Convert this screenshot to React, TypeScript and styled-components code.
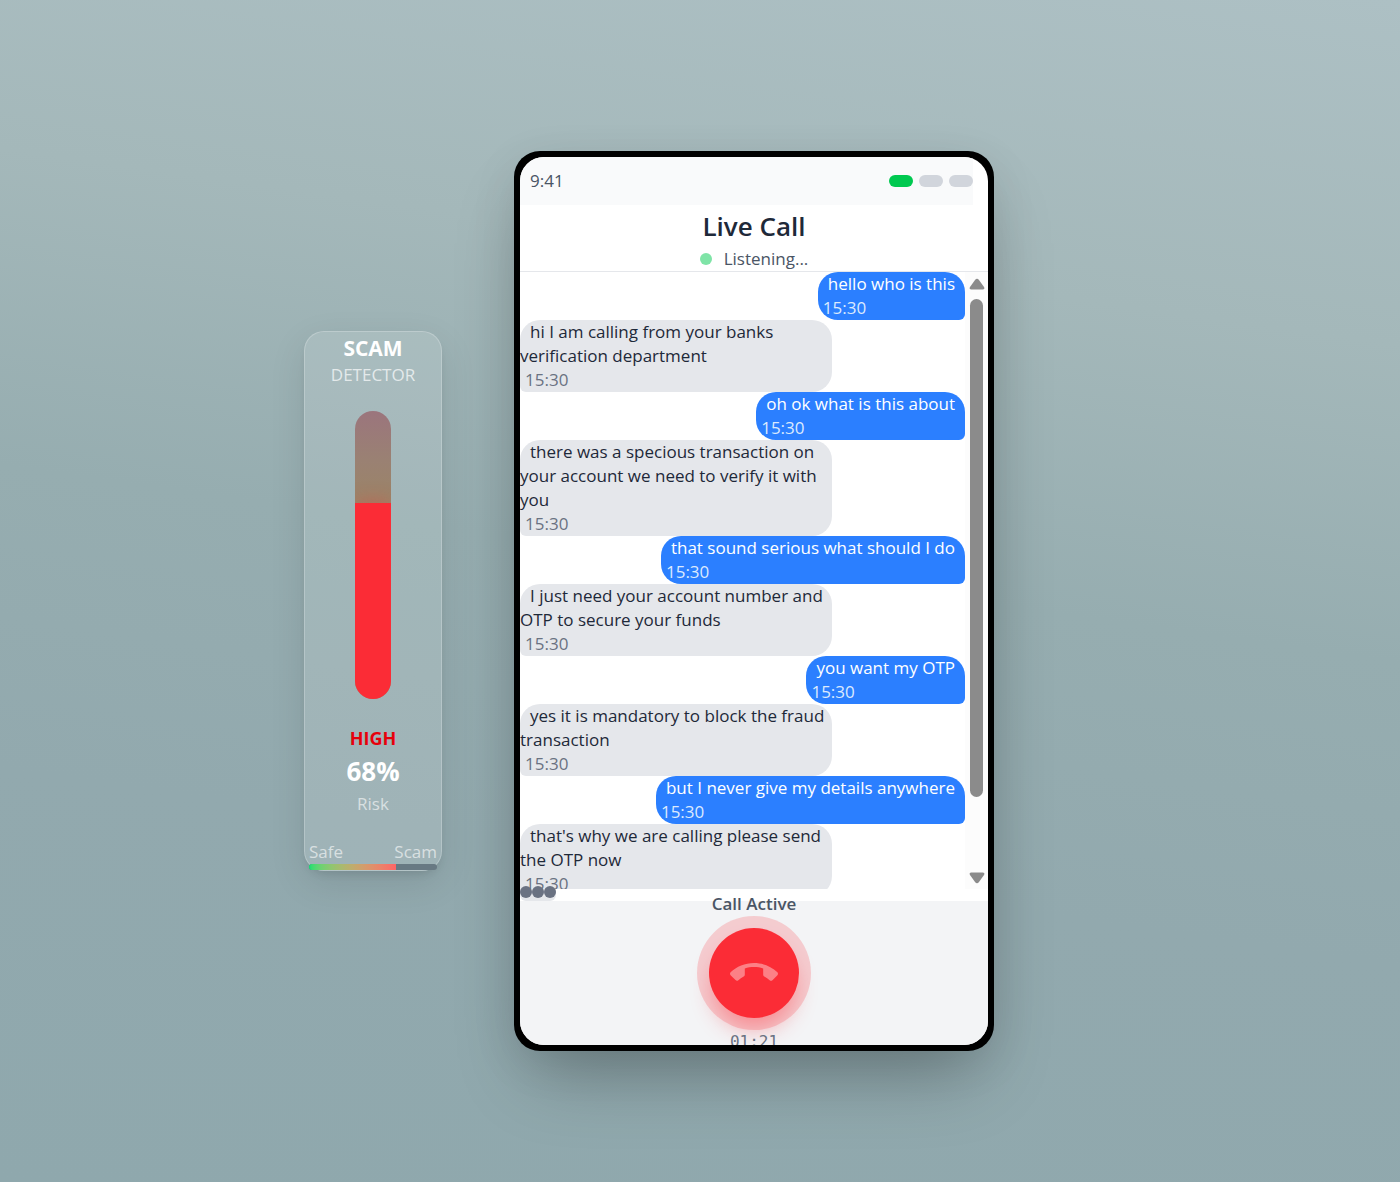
import React from "react";
import styled, { createGlobalStyle } from "styled-components";

const GlobalStyle = createGlobalStyle`
  *, *::before, *::after { box-sizing: border-box; }
  body {
    margin: 0;
    font-family: "Open Sans", "Noto Sans", sans-serif;
    font-size: 17px;
    line-height: 24px;
  }
  h1, h2, p { margin: 0; font-size: inherit; font-weight: inherit; }
`;

const Page = styled.main`
  min-height: 100vh;
  display: flex;
  align-items: center;
  justify-content: center;
  gap: 72px;
  padding: 20px 102px 0 0;
  background: linear-gradient(188deg, #adc0c4 0%, #a4b8ba 25%, #96adb0 48%, #92a9ae 70%, #8fa8ad 100%);
`;

/* ---------- Scam detector ---------- */

const Detector = styled.section`
  flex: none;
  width: 138px;
  display: flex;
  flex-direction: column;
  align-items: center;
  padding: 1px 4px 0;
  border: 1px solid rgba(255, 255, 255, 0.22);
  border-radius: 20px;
  background: rgba(255, 255, 255, 0.12);
  box-shadow: 0 12px 36px rgba(0, 0, 0, 0.1), 0 6px 10px -4px rgba(0, 0, 0, 0.12);
  color: #fff;
`;

const DetectorTitle = styled.h2`
  font-size: 21px;
  line-height: 30px;
  font-weight: 700;
`;

const Caption = styled.p<{ $alpha: number }>`
  color: rgba(255, 255, 255, ${(p) => p.$alpha});
`;

const Tube = styled.div`
  width: 36px;
  height: 288px;
  margin: 24px 0 27px;
  display: flex;
  flex-direction: column;
  justify-content: flex-end;
  overflow: hidden;
  border-radius: 18px;
  background: linear-gradient(#9b757d 0%, #9a8173 17%, #9b8468 30%, #8f9c6c 60%, #7da88c 100%);
`;

const TubeFill = styled.div`
  background: #fb2c36;
  box-shadow: 0 0 20px rgba(251, 44, 54, 0.4);
`;

const Level = styled.p`
  color: #e7000b;
  font-size: 18px;
  font-weight: 700;
`;

const Percent = styled.p`
  font-size: 26px;
  line-height: 42px;
  font-weight: 700;
`;

const Scale = styled.div`
  width: 100%;
  margin-top: 24px;
`;

const ScaleLabels = styled.div`
  display: flex;
  justify-content: space-between;
`;

const ScaleBar = styled.div`
  height: 6px;
  overflow: hidden;
  border-radius: 3px;
  background: #687983;
`;

const ScaleFill = styled.div`
  height: 100%;
  background: linear-gradient(to right in oklab, #05df72, #ff6467);
`;

/* ---------- Phone ---------- */

const Phone = styled.section`
  flex: none;
  width: 480px;
  height: 900px;
  display: flex;
  padding: 6px;
  border-radius: 26px;
  background: #000;
  box-shadow: 0 38px 75px -18px rgba(0, 0, 0, 0.28), 0 12px 48px rgba(0, 0, 0, 0.08);
`;

const Screen = styled.div`
  flex: 1;
  min-width: 0;
  display: flex;
  flex-direction: column;
  overflow: hidden;
  border-radius: 24px;
  background: #fff;
`;

const StatusBar = styled.div`
  flex: none;
  height: 48px;
  margin-right: 15px;
  padding-left: 10px;
  display: flex;
  align-items: center;
  justify-content: space-between;
  background: #f9fafb;
  color: #4a5565;
`;

const Pills = styled.div`
  display: flex;
  gap: 6px;
`;

const Pill = styled.span<{ $on?: boolean }>`
  width: 24px;
  height: 12px;
  border-radius: 6px;
  background: ${(p) => (p.$on ? "#00c950" : "#d1d5dc")};
`;

const Header = styled.header`
  flex: none;
  text-align: center;
  border-bottom: 1px solid #e5e7eb;
`;

const Title = styled.h1`
  font-size: 26px;
  line-height: 42px;
  font-weight: 600;
  color: #1e2939;
`;

const Listening = styled.div`
  display: flex;
  align-items: center;
  justify-content: center;
  gap: 12px;
  color: #4a5565;
`;

const LiveDot = styled.span`
  width: 12px;
  height: 12px;
  border-radius: 50%;
  background: #7fe4a7;
`;

const Transcript = styled.div`
  flex: 1;
  min-height: 0;
  display: flex;
`;

const Messages = styled.div`
  flex: 1;
  display: flex;
  flex-direction: column;
  overflow: hidden;
`;

const Bubble = styled.div<{ $mine: boolean }>`
  flex: none;
  max-width: 70%;
  align-self: ${(p) => (p.$mine ? "flex-end" : "flex-start")};
  border-radius: ${(p) => (p.$mine ? "20px 20px 6px 20px" : "20px 20px 20px 6px")};
  background: ${(p) => (p.$mine ? "#2b7fff" : "#e5e7eb")};
  color: ${(p) => (p.$mine ? "#fff" : "#1e2939")};
`;

const Words = styled.span`
  padding: 0 10px;
`;

const Time = styled.div<{ $mine: boolean }>`
  padding: 0 5px;
  color: ${(p) => (p.$mine ? "#dbeafe" : "#6a7282")};
`;

const ScrollRail = styled.div`
  flex: none;
  width: 23px;
  padding: 6px 0 5px;
  display: flex;
  flex-direction: column;
  align-items: center;
  justify-content: space-between;
  background: #fcfcfc;
`;

const Runway = styled.div`
  flex: 1;
  margin: 9px 0 7px;
`;

const Thumb = styled.div`
  width: 13px;
  border-radius: 7px;
  background: #8b8b8b;
`;

const Typing = styled.div`
  flex: none;
  align-self: flex-start;
  display: flex;
  border-radius: 0 0 6px 6px;
  background: #e5e7eb;
`;

const TypingDot = styled.span`
  width: 12px;
  height: 12px;
  border-radius: 50%;
  background: #6a7282;
  transform: translateY(-3px);
`;

const Controls = styled.footer`
  flex: none;
  height: 144px;
  display: flex;
  flex-direction: column;
  align-items: center;
  justify-content: center;
  background: #f3f4f6;
`;

const CallState = styled.p`
  flex: none;
  font-weight: 600;
  color: #4a5565;
`;

const HangUp = styled.button`
  flex: none;
  width: 90px;
  height: 90px;
  margin: 12px 0;
  padding: 0;
  display: grid;
  place-items: center;
  border: 0;
  border-radius: 50%;
  background: #fb2c36;
  color: rgba(255, 255, 255, 0.4);
  cursor: pointer;
  box-shadow: 0 0 0 12px rgba(251, 44, 54, 0.2), 0 15px 22px -4px rgba(251, 44, 54, 0.4);
`;

const Timer = styled.p`
  flex: none;
  font-family: "DejaVu Sans Mono", "Liberation Mono", monospace;
  font-size: 16px;
  color: #6a7282;
`;

const RISK = 68;

const MESSAGES = [
  { mine: true, text: "hello who is this" },
  { mine: false, text: "hi I am calling from your banks verification department" },
  { mine: true, text: "oh ok what is this about" },
  { mine: false, text: "there was a specious transaction on your account we need to verify it with you" },
  { mine: true, text: "that sound serious what should I do" },
  { mine: false, text: "I just need your account number and OTP to secure your funds" },
  { mine: true, text: "you want my OTP" },
  { mine: false, text: "yes it is mandatory to block the fraud transaction" },
  { mine: true, text: "but I never give my details anywhere" },
  { mine: false, text: "that's why we are calling please send the OTP now" },
];

function Arrow({ down }: { down?: boolean }) {
  return (
    <svg width="16" height="12" viewBox="0 0 16 12" aria-hidden="true">
      <path
        d={
          down
            ? "M2 0.5H14Q16.2 1 15 3L10 10Q8 12.4 6 10L1 3Q-0.2 1 2 0.5Z"
            : "M2 11.5H14Q16.2 11 15 9L10 2Q8 -0.4 6 2L1 9Q-0.2 11 2 11.5Z"
        }
        fill="#8b8b8b"
      />
    </svg>
  );
}

export default function App() {
  return (
    <>
      <GlobalStyle />
      <Page>
        <Detector aria-label="Scam detector">
          <DetectorTitle>SCAM</DetectorTitle>
          <Caption $alpha={0.7}>DETECTOR</Caption>
          <Tube>
            <TubeFill style={{ height: `${RISK}%` }} />
          </Tube>
          <Level>HIGH</Level>
          <Percent>{RISK}%</Percent>
          <Caption $alpha={0.6}>Risk</Caption>
          <Scale>
            <ScaleLabels>
              <Caption $alpha={0.6}>Safe</Caption>
              <Caption $alpha={0.6}>Scam</Caption>
            </ScaleLabels>
            <ScaleBar>
              <ScaleFill style={{ width: `${RISK}%` }} />
            </ScaleBar>
          </Scale>
        </Detector>

        <Phone aria-label="Phone">
          <Screen>
            <StatusBar>
              <span>9:41</span>
              <Pills>
                <Pill $on />
                <Pill />
                <Pill />
              </Pills>
            </StatusBar>
            <Header>
              <Title>Live Call</Title>
              <Listening>
                <LiveDot />
                <span>Listening...</span>
              </Listening>
            </Header>
            <Transcript>
              <Messages role="log">
                {MESSAGES.map((m) => (
                  <Bubble key={m.text} $mine={m.mine}>
                    <Words>{m.text}</Words>
                    <Time $mine={m.mine}>15:30</Time>
                  </Bubble>
                ))}
              </Messages>
              <ScrollRail aria-hidden="true">
                <Arrow />
                <Runway>
                  <Thumb style={{ height: "88%" }} />
                </Runway>
                <Arrow down />
              </ScrollRail>
            </Transcript>
            <Typing aria-label="Typing">
              <TypingDot />
              <TypingDot />
              <TypingDot />
            </Typing>
            <Controls>
              <CallState>Call Active</CallState>
              <HangUp type="button" aria-label="End call">
                <svg width="48" height="48" viewBox="0 0 24 24" fill="currentColor" aria-hidden="true">
                  <path d="M12 9c-1.6 0-3.15.25-4.6.72v3.1c0 .39-.23.74-.56.9-.98.49-1.87 1.12-2.66 1.85-.18.18-.43.28-.7.28-.28 0-.53-.11-.71-.29L.29 13.08c-.18-.17-.29-.42-.29-.7 0-.28.11-.53.29-.71C3.34 8.78 7.46 7 12 7s8.66 1.78 11.71 4.67c.18.18.29.43.29.71 0 .28-.11.53-.29.71l-2.48 2.48c-.18.18-.43.29-.71.29-.27 0-.52-.11-.7-.28-.79-.74-1.69-1.36-2.67-1.85-.33-.16-.56-.5-.56-.9v-3.1C15.15 9.25 13.6 9 12 9z" />
                </svg>
              </HangUp>
              <Timer>01:21</Timer>
            </Controls>
          </Screen>
        </Phone>
      </Page>
    </>
  );
}
